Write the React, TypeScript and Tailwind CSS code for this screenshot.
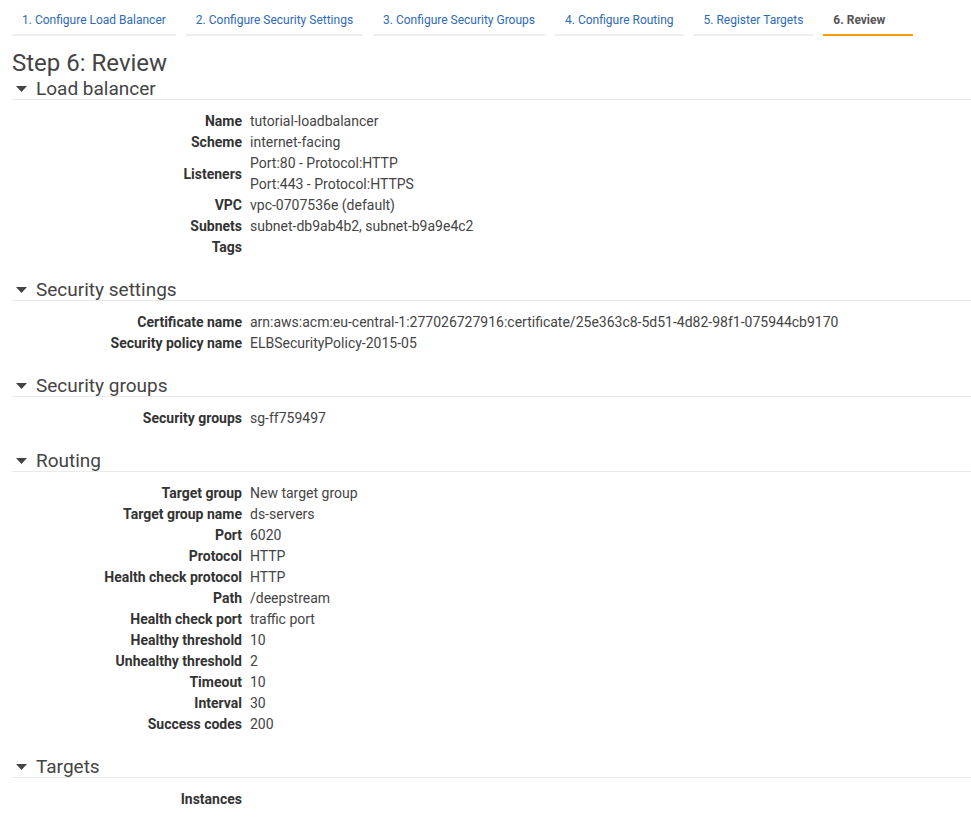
const tabs = [
  { label: '1. Configure Load Balancer' },
  { label: '2. Configure Security Settings' },
  { label: '3. Configure Security Groups' },
  { label: '4. Configure Routing' },
  { label: '5. Register Targets' },
  { label: '6. Review', active: true },
];

type Row = { label: string; values: string[] };

const sections: { title: string; rows: Row[] }[] = [
  {
    title: 'Load balancer',
    rows: [
      { label: 'Name', values: ['tutorial-loadbalancer'] },
      { label: 'Scheme', values: ['internet-facing'] },
      { label: 'Listeners', values: ['Port:80 - Protocol:HTTP', 'Port:443 - Protocol:HTTPS'] },
      { label: 'VPC', values: ['vpc-0707536e (default)'] },
      { label: 'Subnets', values: ['subnet-db9ab4b2, subnet-b9a9e4c2'] },
      { label: 'Tags', values: [''] },
    ],
  },
  {
    title: 'Security settings',
    rows: [
      {
        label: 'Certificate name',
        values: ['arn:aws:acm:eu-central-1:277026727916:certificate/25e363c8-5d51-4d82-98f1-075944cb9170'],
      },
      { label: 'Security policy name', values: ['ELBSecurityPolicy-2015-05'] },
    ],
  },
  {
    title: 'Security groups',
    rows: [{ label: 'Security groups', values: ['sg-ff759497'] }],
  },
  {
    title: 'Routing',
    rows: [
      { label: 'Target group', values: ['New target group'] },
      { label: 'Target group name', values: ['ds-servers'] },
      { label: 'Port', values: ['6020'] },
      { label: 'Protocol', values: ['HTTP'] },
      { label: 'Health check protocol', values: ['HTTP'] },
      { label: 'Path', values: ['/deepstream'] },
      { label: 'Health check port', values: ['traffic port'] },
      { label: 'Healthy threshold', values: ['10'] },
      { label: 'Unhealthy threshold', values: ['2'] },
      { label: 'Timeout', values: ['10'] },
      { label: 'Interval', values: ['30'] },
      { label: 'Success codes', values: ['200'] },
    ],
  },
  {
    title: 'Targets',
    rows: [{ label: 'Instances', values: [''] }],
  },
];

function SectionHeader({ title }: { title: string }) {
  return (
    <div className="flex items-center h-[22px] border-b border-[#eaeaea]">
      <svg width="11" height="6" viewBox="0 0 11 6" className="ml-[4px] mr-[9px]">
        <polygon points="0,0 11,0 5.5,6" fill="#444" />
      </svg>
      <span className="text-[19px] leading-[22px] text-[#444]">{title}</span>
    </div>
  );
}

export default function App() {
  return (
    <div
      className="min-h-screen bg-white pl-3 text-[#444]"
      style={{ fontFamily: 'Roboto, "Liberation Sans", sans-serif' }}
    >
      <div className="flex gap-[10px]">
        {tabs.map((tab) => (
          <div
            key={tab.label}
            className={`px-[10px] pt-[11px] pb-[5px] border-b-2 text-[12px] leading-[18px] whitespace-nowrap ${
              tab.active
                ? 'border-[#ff9900] text-[#555] font-bold w-[90px]'
                : 'border-[#eeeeee] text-[#2e6ab8]'
            }`}
          >
            {tab.label}
          </div>
        ))}
      </div>

      <h1 className="mt-[13px] mb-[1px] text-[24px] leading-[28px] text-[#444]">Step 6: Review</h1>

      {sections.map((section, i) => (
        <div key={section.title} className={i > 0 ? 'mt-[21px]' : ''}>
          <SectionHeader title={section.title} />
          <div className="pt-[11px] text-[14px] leading-[21px]">
            {section.rows.map((row) => (
              <div key={row.label} className="flex items-center">
                <div className="w-[230px] shrink-0 text-right font-bold text-[#333]">{row.label}</div>
                <div className="ml-[8px] text-[#444]">
                  {row.values.map((v, j) => (
                    <div key={j} className="h-[21px] whitespace-nowrap">
                      {v}
                    </div>
                  ))}
                </div>
              </div>
            ))}
          </div>
        </div>
      ))}
    </div>
  );
}
